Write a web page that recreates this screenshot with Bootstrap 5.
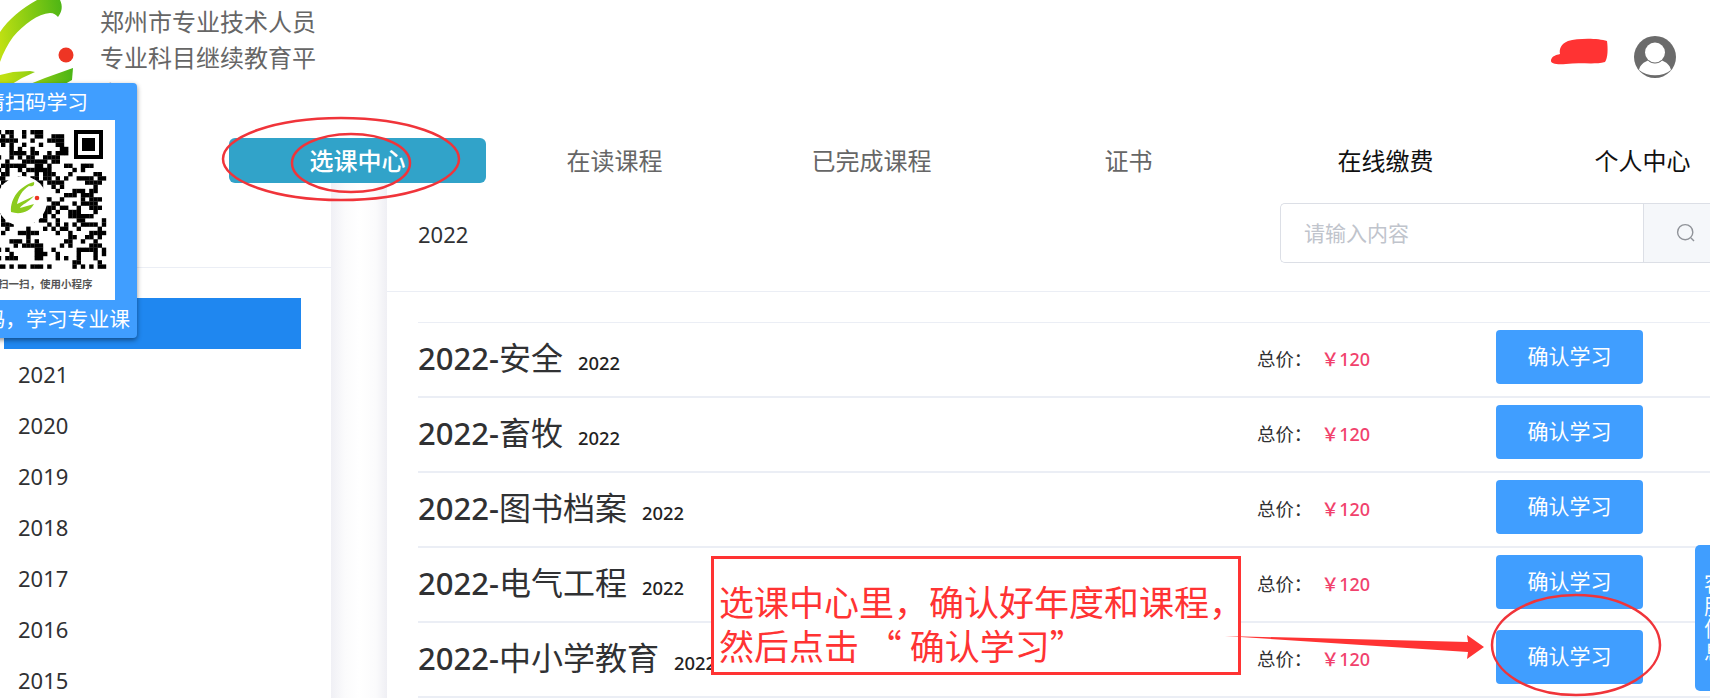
<!DOCTYPE html>
<html lang="zh">
<head>
<meta charset="utf-8">
<title>选课中心</title>
<link href="https://cdn.jsdelivr.net/npm/bootstrap@5.3.0/dist/css/bootstrap.min.css" rel="stylesheet">
<style>
html,body{height:698px;overflow:hidden;background:#fff}
body{font-family:"Noto Sans","Noto Sans CJK SC",sans-serif;color:#303133;position:relative;width:1710px}
.site-head{height:138px;overflow:hidden}
.logo-box{width:100px;flex:none}
.site-name{width:220px;font-size:24px;line-height:36px;color:#666;padding-top:4px}
.user-box{margin-left:auto;padding:36px 34px 0 0;gap:24px}
.top-nav{height:45px;padding-left:229px;width:1800px}
.top-link{flex:0 0 257px;text-align:center;font-size:24px;line-height:45px;color:#666;text-decoration:none}
.top-link.on{background:#31a3c9;color:#fff;border-radius:6px;font-weight:500}
.top-link.dark{color:#111}
.page-body{height:515px}
.side-col{width:331px;flex:none;padding-top:84px;background:#fff}
.side-list{border-top:1px solid #ebeef5;padding:30px 30px 0 4px;margin-left:0}
.side-list a{display:block;height:51px;line-height:51px;font-size:22px;color:#303133;padding-left:14px;text-decoration:none}
.side-list a.on{background:#1f87f0;color:#fff}
.gutter{width:56px;flex:none;background:linear-gradient(90deg,#f0f0f5,#fbfbfc 25%,#fff 50%,#fbfbfc 80%,#efeff4)}
.main-col{flex:1;min-width:0;background:#fff}
.tool-row{height:109px;border-bottom:1px solid #ebeef5;padding:20px 0 0 31px}
.year-label{font-size:22px;line-height:62px}
.find-box{margin-left:auto;width:430px;height:60px;border:1px solid #dcdfe6;border-right:0;border-radius:5px 0 0 5px}
.find-input{width:363px;border:0;border-right:1px solid #dcdfe6;border-radius:5px 0 0 5px;padding:2px 23px 0;font-size:21px;color:#303133;background:#fff;outline:0}
.find-input::placeholder{color:#c0c4cc}
.find-btn{flex:1;background:#f5f7fa;padding:0 0 0 32px}
.course-list{margin:30px 0 0 31px;border-top:1px solid #ebeef5}
.course-row{height:75px;border-bottom:2px solid #ebeef5;padding-right:67px}
.course-name{font-size:32px;line-height:75px;color:#303133;padding-top:1px}
.course-num{font-size:31px;font-weight:500}
.course-year{font-size:18.4px;font-weight:500;margin-left:15px;color:#222}
.price-box{width:239px;flex:none;font-size:18.4px;color:#303133;padding-bottom:2px}
.price-val{color:#f1416c;margin-left:9px;font-size:18px;font-weight:500}
.learn-btn{width:147px;height:54px;padding:0;margin-bottom:5px;background:#409eff;border:0;border-radius:4px;color:#fff;font-size:21px}
.scan-pop{position:absolute;left:-22px;top:83px;width:159px;height:255px;background:#409eff;border-radius:4px;box-shadow:0 2px 5px rgba(0,0,0,.45);color:#fff;z-index:5;font-size:20.8px;overflow:hidden}
.scan-title{height:37px;line-height:38px;padding-left:6px;white-space:nowrap}
.scan-white{width:137px;height:180px;background:#fff;display:block}
.scan-foot{line-height:38px;white-space:nowrap;text-align:right;padding-right:7px}
.help-tab{position:absolute;left:1695px;top:545px;width:30px;height:146px;background:#409eff;border-radius:5px;color:#fff;font-size:21px;line-height:22.5px;padding:27px 0 0 9px;z-index:5}
.help-tab span{display:block;width:21px}
.note-box{position:absolute;left:711px;top:556px;width:530px;height:119px;border:3px solid #f33;background:#fff;color:#f33;font-size:35px;line-height:44px;padding:20px 0 0 5px;z-index:6;white-space:nowrap;font-family:"Noto Sans CJK SC",sans-serif}
.ink{position:absolute;left:0;top:0;z-index:7;pointer-events:none}
</style>
</head>
<body>
<header class="site-head d-flex">
  <div class="logo-box">
    <svg width="100" height="100" viewBox="0 0 100 100" aria-hidden="true">
      <defs><linearGradient id="lg" gradientUnits="userSpaceOnUse" x1="0" y1="40" x2="74" y2="30"><stop offset="0" stop-color="#bfe012"/><stop offset="1" stop-color="#3fb015"/></linearGradient></defs>
      <path d="M0 32C8 20 22 8 37 0L60 0C63 6 62 12 58 17C56 15 54 13 50 13C38 14 24 24 13 37C8 44 3 53 0 62Z" fill="url(#lg)"/>
      <circle cx="66" cy="55" r="7.5" fill="#ee3524"/>
      <path d="M0 75L13 72L30 71L35 72L22 78L12 84L0 84Z" fill="url(#lg)"/>
      <path d="M30 84L45 78L73 68L72 80L65 84Z" fill="url(#lg)"/>
    </svg>
  </div>
  <div class="site-name">郑州市专业技术人员专业科目继续教育平台</div>
  <div class="user-box d-flex">
    <svg width="60" height="30" viewBox="0 0 60 30" aria-hidden="true"><path d="M1 24C2 20 6 19 10 18C9 13 11 8 18 5C28 2 48 2 57 5C58 12 58 22 55 26C44 29 30 26 16 28C8 29 0 28 1 24Z" fill="#f33"/></svg>
    <svg width="42" height="42" viewBox="0 0 42 42" aria-hidden="true"><circle cx="21" cy="21" r="21" fill="#6b6b6b"/><circle cx="21" cy="16.5" r="10" fill="#fff"/><path d="M5 34C6 29 10 26 14 24.5C17 28.5 25 28.5 28 24.5C32 26 36 29 37 34C29 41 13 41 5 34Z" fill="#fff"/></svg>
  </div>
</header>
<nav class="top-nav d-flex">
  <a class="top-link on" href="#">选课中心</a>
  <a class="top-link" href="#">在读课程</a>
  <a class="top-link" href="#">已完成课程</a>
  <a class="top-link" href="#">证书</a>
  <a class="top-link dark" href="#">在线缴费</a>
  <a class="top-link dark" href="#">个人中心</a>
</nav>
<div class="page-body d-flex">
  <aside class="side-col">
    <div class="side-list">
      <a class="on" href="#">2022</a>
      <a href="#">2021</a>
      <a href="#">2020</a>
      <a href="#">2019</a>
      <a href="#">2018</a>
      <a href="#">2017</a>
      <a href="#">2016</a>
      <a href="#">2015</a>
    </div>
  </aside>
  <div class="gutter"></div>
  <main class="main-col">
    <div class="tool-row d-flex">
      <div class="year-label">2022</div>
      <div class="find-box d-flex">
        <input class="find-input" type="text" placeholder="请输入内容">
        <div class="find-btn d-flex align-items-center">
          <svg width="20" height="20" viewBox="0 0 20 20" aria-hidden="true"><circle cx="9.2" cy="9.2" r="7.6" fill="none" stroke="#909399" stroke-width="1.4"/><path d="M15 15l3 3" stroke="#909399" stroke-width="1.4"/></svg>
        </div>
      </div>
    </div>
    <div class="course-list">
      <div class="course-row d-flex align-items-center"><div class="course-name flex-grow-1"><span class="course-num">2022-</span>安全<span class="course-year">2022</span></div><div class="price-box">总价：<span class="price-val">￥120</span></div><button class="learn-btn" type="button">确认学习</button></div>
      <div class="course-row d-flex align-items-center"><div class="course-name flex-grow-1"><span class="course-num">2022-</span>畜牧<span class="course-year">2022</span></div><div class="price-box">总价：<span class="price-val">￥120</span></div><button class="learn-btn" type="button">确认学习</button></div>
      <div class="course-row d-flex align-items-center"><div class="course-name flex-grow-1"><span class="course-num">2022-</span>图书档案<span class="course-year">2022</span></div><div class="price-box">总价：<span class="price-val">￥120</span></div><button class="learn-btn" type="button">确认学习</button></div>
      <div class="course-row d-flex align-items-center"><div class="course-name flex-grow-1"><span class="course-num">2022-</span>电气工程<span class="course-year">2022</span></div><div class="price-box">总价：<span class="price-val">￥120</span></div><button class="learn-btn" type="button">确认学习</button></div>
      <div class="course-row d-flex align-items-center"><div class="course-name flex-grow-1"><span class="course-num">2022-</span>中小学教育<span class="course-year">2022</span></div><div class="price-box">总价：<span class="price-val">￥120</span></div><button class="learn-btn" type="button">确认学习</button></div>
    </div>
  </main>
</div>

<div class="scan-pop">
  <div class="scan-title">请扫码学习</div>
  <div class="scan-white">
    <svg id="qr" width="137" height="180" viewBox="0 0 137 180" aria-hidden="true">
      <g id="qrcells" fill="#000"></g>
      <circle cx="44" cy="81" r="25" fill="#fff"/>
      <path d="M33 92C32 78 42 66 56 62C57 66 54 67 51 66C44 70 40 78 39 84L56 76C50 83 44 84 42 88L56 84C52 92 42 95 33 92Z" fill="#8ccb1e"/>
      <circle cx="59" cy="78" r="2.3" fill="#ee3524"/>
      <text x="20" y="168" font-size="10.5" fill="#555" font-family="'Noto Sans CJK SC',sans-serif" font-weight="700">扫一扫，使用小程序</text>
    </svg>
  </div>
  <div class="scan-foot">码，学习专业课</div>
</div>

<div class="help-tab"><span>客服信息</span></div>

<div class="note-box">选课中心里，确认好年度和课程，<br>然后点击 “ 确认学习”</div>

<svg class="ink" width="1710" height="698" viewBox="0 0 1710 698" aria-hidden="true">
  <g fill="none" stroke="#f0343a" stroke-width="2.5">
    <ellipse cx="341" cy="159" rx="118" ry="41"/>
    <ellipse cx="351" cy="163" rx="59" ry="29"/>
    <ellipse cx="1576" cy="645" rx="84" ry="50"/>
  </g>
  <path d="M1225 636L1468 642L1467 635L1484 647L1467 659L1468 652Z" fill="#f33"/>
</svg>

<script src="https://cdn.jsdelivr.net/npm/bootstrap@5.3.0/dist/js/bootstrap.bundle.min.js"></script>
<script>
(function(){
  var g=document.getElementById('qrcells'),size=4.2,ox=23,oy=10,seed=77,h='';
  function rnd(){seed=(seed*1103515245+12345)&2147483647;return (seed>>8&255)/255;}
  function finder(x,y){
    return '<rect x="'+x+'" y="'+y+'" width="29" height="29"/><rect x="'+(x+4)+'" y="'+(y+4)+'" width="21" height="21" fill="#fff"/><rect x="'+(x+8)+'" y="'+(y+8)+'" width="13" height="13"/>';
  }
  for(var r=0;r<33;r++){for(var c=-6;c<25;c++){
    var x=ox+c*size,y=oy+r*size;
    if(x>=90&&y<42)continue;
    if(rnd()<.5)h+='<rect x="'+x.toFixed(1)+'" y="'+y.toFixed(1)+'" width="4.4" height="4.4"/>';
  }}
  h+=finder(96,10);
  g.innerHTML=h;
})();
</script>
</body>
</html>
